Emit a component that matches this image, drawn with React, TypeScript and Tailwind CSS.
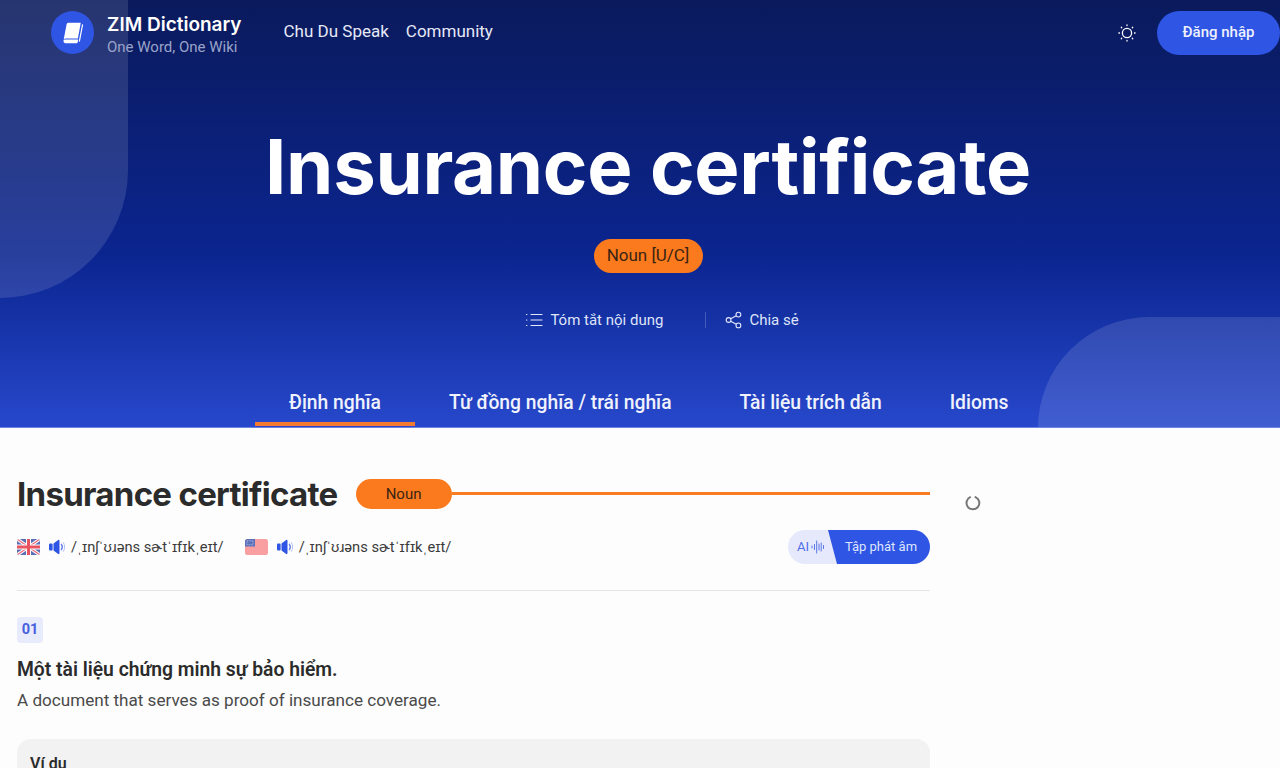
import React from "react";

const Book = () => (
  <svg width="26" height="26" viewBox="0 0 24 24" fill="none">
    <path d="M7.6 2.5h11.6l-2.7 14.6H5.2c-.8 0-1.4.3-1.8.8L6 4.4c.2-1.1.7-1.9 1.6-1.9z" fill="#fff" />
    <path d="M3.2 19.2c0-1 .8-1.3 1.8-1.3h11.8l-.4 2.4c-.1.7-.7 1.2-1.4 1.2H5c-1 0-1.8-.9-1.8-2.3z" fill="#fff" />
    <path d="M20.8 4.5l-2.9 15" stroke="#fff" strokeWidth="1.1" strokeLinecap="round" />
  </svg>
);

const Sun = () => (
  <svg width="18" height="18" viewBox="0 0 18 18" fill="none" stroke="#fff" strokeWidth="1.3" strokeLinecap="round">
    <circle cx="9" cy="9" r="4.6" />
    <path d="M9 .9v.6M9 16.5v.6M.9 9h.6M16.5 9h.6M3.3 3.3l.4.4M14.3 14.3l.4.4M3.3 14.7l.4-.4M14.3 3.7l.4-.4" />
  </svg>
);

const ListIcon = () => (
  <svg width="18" height="18" viewBox="0 0 18 18" fill="none" stroke="#e4e9fb" strokeWidth="1.2" strokeLinecap="round">
    <path d="M6 3.5h11M6 9h11M6 14.5h11M1.5 3.5h.4M1.5 9h.4M1.5 14.5h.4" />
  </svg>
);

const ShareIcon = () => (
  <svg width="18" height="18" viewBox="0 0 18 18" fill="none" stroke="#e4e9fb" strokeWidth="1.1">
    <circle cx="3.6" cy="9" r="2.4" />
    <circle cx="13.4" cy="3.6" r="2.4" />
    <circle cx="13.4" cy="14.4" r="2.4" />
    <path d="M5.7 7.8l5.6-3M5.7 10.2l5.6 3" />
  </svg>
);

const Speaker = () => (
  <svg width="17" height="16" viewBox="0 0 17 16" className="shrink-0">
    <rect x="0" y="4.5" width="3.6" height="7" rx="1" fill="#2f55e4" />
    <path d="M4.5 4.5L9.2 1c.6-.4 1.3 0 1.3.7v12.6c0 .7-.7 1.1-1.3.7L4.5 11.5z" fill="#2f55e4" />
    <path d="M12.4 5.3c1.1 1.6 1.1 3.8 0 5.4" stroke="#5f7ce9" strokeWidth="1.3" fill="none" strokeLinecap="round" />
    <path d="M14.4 3.6c1.7 2.5 1.7 6.3 0 8.8" stroke="#b3c1f3" strokeWidth="1" fill="none" strokeLinecap="round" />
  </svg>
);

const UK = () => (
  <svg width="23" height="16" viewBox="0 0 23 16" className="shrink-0">
    <defs>
      <clipPath id="uk"><rect width="23" height="16" rx="2.5" /></clipPath>
    </defs>
    <g clipPath="url(#uk)">
      <rect width="23" height="16" fill="#5b6fb5" />
      <path d="M0 0L23 16M23 0L0 16" stroke="#fff" strokeWidth="3.2" />
      <path d="M0 0L23 16M23 0L0 16" stroke="#ee6a78" strokeWidth="1.2" />
      <path d="M11.5 0v16M0 8h23" stroke="#fff" strokeWidth="5" />
      <path d="M11.5 0v16M0 8h23" stroke="#e9525f" strokeWidth="3" />
    </g>
  </svg>
);

const US = () => (
  <svg width="23" height="16" viewBox="0 0 23 16" className="shrink-0">
    <rect width="23" height="16" rx="2.5" fill="#f99ea1" />
    <path d="M0 2.5A2.5 2.5 0 0 1 2.5 0H10v7.5H0z" fill="#5c70b8" />
    <rect x="2" y="1.8" width="6" height="4" fill="none" stroke="#b9c3e8" strokeWidth="0.8" strokeDasharray="1 0.6" />
  </svg>
);

const Wave = () => (
  <svg width="14" height="14" viewBox="0 0 14 14" stroke="#5a76e8" strokeWidth="1" strokeLinecap="round">
    <path d="M1 6v2M3.5 4.5v5M5.7 1v12M8 4v6M10.2 3v8M12.5 5.5v3" />
  </svg>
);

const ipa = "/ˌɪnʃˈʊɹəns sɚtˈɪfɪkˌeɪt/";

export default function App() {
  return (
    <div className="h-[768px] overflow-hidden bg-[#fdfdfd] font-['Roboto',sans-serif]">
      <header className="relative h-[428px] overflow-hidden border-b border-[#6f84de] bg-gradient-to-b from-[#0a1a5c] via-[#0b2590] via-[60%] to-[#2748cc]">
        <div className="absolute left-0 top-0 h-[298px] w-[128px] rounded-br-[128px] bg-white/[0.12]" />
        <div className="absolute left-[1038px] top-[317px] h-[111px] w-[242px] rounded-tl-[111px] bg-white/[0.12]" />

        <div className="relative flex h-[65px] items-center pl-[51px]">
          <div className="flex h-[43px] w-[43px] items-center justify-center rounded-full bg-[#2f55e4]">
            <Book />
          </div>
          <div className="ml-[13px] flex flex-col pt-[5px]">
            <span className="font-['Inter',sans-serif] text-[19px] font-semibold leading-[24px] text-white">ZIM Dictionary</span>
            <span className="text-[15px] leading-[20px] text-[#9aa3c9]">One Word, One Wiki</span>
          </div>
          <nav className="ml-[42px] flex gap-[17px] pb-[2px] text-[17px] text-[#e6e9f7]">
            <span>Chu Du Speak</span>
            <span>Community</span>
          </nav>
          <div className="ml-auto flex items-center">
            <Sun />
            <div className="ml-[21px] flex h-[44px] w-[123px] items-center justify-center rounded-full bg-[#2f55e4] text-[15px] font-medium text-[#eef1fd]">
              Đăng nhập
            </div>
          </div>
        </div>

        <div className="relative flex flex-col items-center pl-[16px]">
          <h1 className="mt-[53px] font-['Inter',sans-serif] text-[76px] font-bold leading-[96px] tracking-[-0.3px] text-white">Insurance certificate</h1>
          <div className="mt-[25px] flex h-[34px] w-[109px] items-center justify-center rounded-full bg-[#fc7a1e] text-[17px] text-[#3a2413]">
            Noun [U/C]
          </div>
          <div className="mt-[29px] flex h-[36px] items-center pl-[28px] text-[15px] text-[#dfe4f8]">
            <ListIcon />
            <span className="ml-[7px]">Tóm tắt nội dung</span>
            <span className="ml-[42px] h-[16px] w-px bg-white/20" />
            <span className="ml-[19px]"><ShareIcon /></span>
            <span className="ml-[6px]">Chia sẻ</span>
          </div>
        </div>

        <div className="absolute bottom-[1px] left-[255px] flex h-[50px] text-[19.3px] font-medium text-[#f0f2fc]">
          <div className="flex w-[160px] items-center justify-center border-b-[4px] border-[#f47a32] pt-[8px]">Định nghĩa</div>
          <div className="ml-[34px] flex items-center pt-[4px]">Từ đồng nghĩa / trái nghĩa</div>
          <div className="ml-[68px] flex items-center pt-[4px]">Tài liệu trích dẫn</div>
          <div className="ml-[68px] flex items-center pt-[4px]">Idioms</div>
        </div>
      </header>

      <main className="flex pl-[17px]">
        <section className="w-[913px]">
          <div className="mt-[45px] flex h-[42px] items-center">
            <h2 className="font-['Inter',sans-serif] text-[33px] font-bold leading-[42px] tracking-[-0.7px] text-[#2b2b2b]">Insurance certificate</h2>
            <div className="ml-[18px] flex h-[30px] w-[96px] shrink-0 items-center justify-center rounded-full bg-[#fc7a1e] text-[15px] text-[#3a2413]">Noun</div>
            <div className="mb-[2px] h-[3px] flex-1 bg-[#f97b22]" />
          </div>

          <div className="mt-[15px] flex h-[34px] items-center text-[14.7px] text-[#3b3b3b]">
            <UK />
            <span className="ml-[9px]"><Speaker /></span>
            <span className="ml-[5px]">{ipa}</span>
            <span className="ml-[21px]"><US /></span>
            <span className="ml-[9px]"><Speaker /></span>
            <span className="ml-[5px]">{ipa}</span>
            <div className="ml-auto flex h-[34px] w-[142px] overflow-hidden rounded-full bg-[#e6e9fb] text-[13px]">
              <div className="flex w-[40px] items-center gap-[2px] pl-[9px] text-[#4f6de6]">
                AI <Wave />
              </div>
              <div className="flex flex-1 items-center justify-center bg-[#2f55e4] pl-[4px] text-[#dfe5fc] [clip-path:polygon(0_0,100%_0,100%_100%,9px_100%)]">
                Tập phát âm
              </div>
            </div>
          </div>

          <div className="mt-[26px] border-t border-[#e5e5e5]" />

          <div className="mt-[26px] flex h-[26px] w-[26px] items-center justify-center rounded bg-[#e8ebfc] text-[14.5px] font-bold text-[#4560dc]">01</div>
          <p className="mt-[14px] text-[19.3px] font-semibold leading-[26px] text-[#2b2b2b]">Một tài liệu chứng minh sự bảo hiểm.</p>
          <p className="mt-[4px] text-[17.1px] leading-[26px] text-[#4a4a4a]">A document that serves as proof of insurance coverage.</p>

          <div className="mt-[26px] h-[60px] rounded-t-[14px] bg-[#f2f2f2] px-[13px] pt-[13px] text-[16px] font-semibold text-[#2b2b2b]">Ví dụ</div>
        </section>
        <aside className="ml-[35px] pt-[67px]">
          <svg width="16" height="16" viewBox="0 0 16 16" fill="none" stroke="#777" strokeWidth="2" strokeLinecap="round">
            <path d="M10.5 2.1a6.4 6.4 0 1 1-5.4.1" />
          </svg>
        </aside>
      </main>
    </div>
  );
}
